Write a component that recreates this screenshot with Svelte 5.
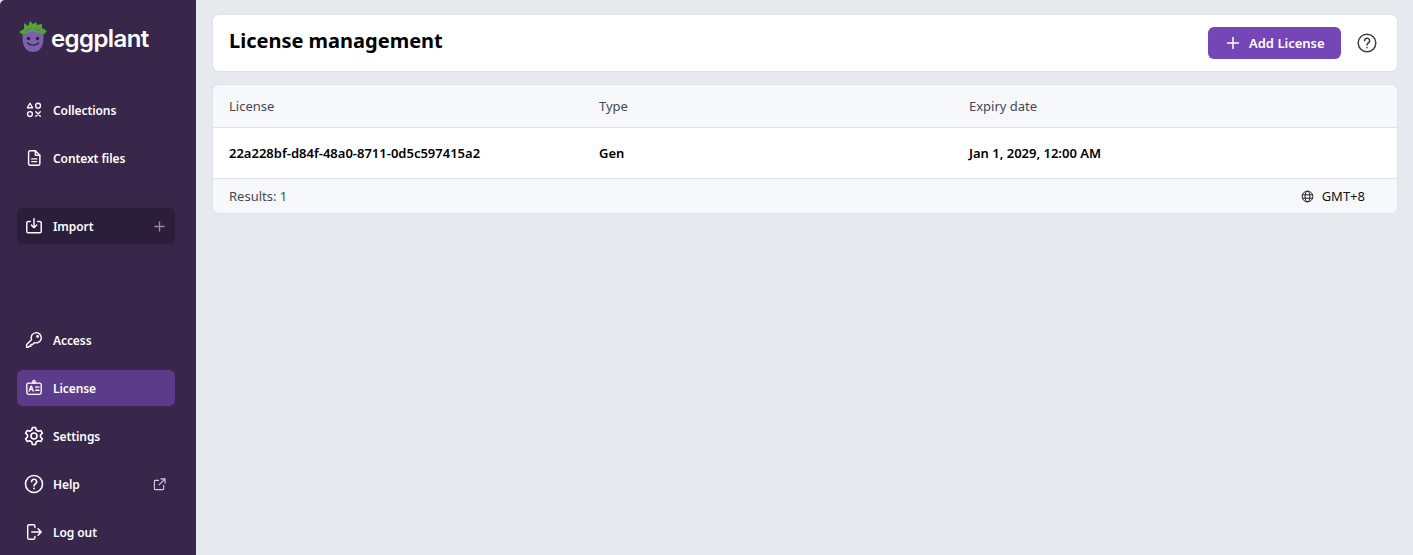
<script>
	const columns = ['License', 'Type', 'Expiry date'];
	const licenses = [
		{ id: '22a228bf-d84f-48a0-8711-0d5c597415a2', type: 'Gen', expiry: 'Jan 1, 2029, 12:00 AM' }
	];
</script>

<div class="page">
	<aside class="sidebar">
		<div class="logo">
			<svg width="30" height="34" viewBox="0 0 30 34">
				<path d="M1 13 L6 10 L6 4 L10 7 L12 2 L15 5 L18 3 L19 6 L24 5 L24 9 L29 12 L26 15 L24 18 L6 18 L4 15 Z" fill="#4fa82c" />
				<path d="M15 9 C22 9 25.5 13 25.5 19 C25.5 27 22 33 15 33 C8 33 4.5 27 4.5 19 C4.5 13 8 9 15 9 Z" fill="#7d60ab" />
				<path d="M5 12 L10 12 L15 9 L20 12 L25 12 L23 15 L15 12 L7 15 Z" fill="#4fa82c" />
				<circle cx="10.5" cy="19.5" r="1.7" fill="#2f1f42" />
				<circle cx="19.5" cy="19.5" r="1.7" fill="#2f1f42" />
				<path d="M9.5 24 C12 27 18 27 20.5 24" fill="none" stroke="#2f1f42" stroke-width="1.2" stroke-linecap="round" />
			</svg>
			<span class="wordmark">eggplant</span>
		</div>

		<nav class="group">
			<a class="item">
				<svg viewBox="0 0 20 20" class="icon thin">
					<path d="M5.5 2.5 L8.5 7.5 H2.5 Z" />
					<circle cx="14.5" cy="5.2" r="2.7" />
					<circle cx="5.5" cy="14.5" r="2.7" />
					<path d="M12 12 L17 17 M17 12 L12 17" />
				</svg>
				<span>Collections</span>
			</a>
			<a class="item">
				<svg viewBox="0 0 20 20" class="icon">
					<path d="M4 3.5 A1.5 1.5 0 0 1 5.5 2 H11.5 L16.5 7 V16.5 A1.5 1.5 0 0 1 15 18 H5.5 A1.5 1.5 0 0 1 4 16.5 Z" />
					<path d="M11.5 2 V7 H16.5 M7.5 11 H13 M7.5 14 H13" />
				</svg>
				<span>Context files</span>
			</a>
		</nav>

		<nav class="group import">
			<a class="item dark">
				<svg viewBox="0 0 20 20" class="icon">
					<path d="M6 5 H3.5 A1.5 1.5 0 0 0 2 6.5 V16 A1.5 1.5 0 0 0 3.5 17.5 H16.5 A1.5 1.5 0 0 0 18 16 V6.5 A1.5 1.5 0 0 0 16.5 5 H14" />
					<path d="M10 2 V12 M7 9 L10 12 L13 9" />
				</svg>
				<span>Import</span>
				<svg viewBox="0 0 12 12" class="trail plus">
					<path d="M6 1 V11 M1 6 H11" />
				</svg>
			</a>
		</nav>

		<nav class="group bottom">
			<a class="item">
				<svg viewBox="0 0 20 20" class="icon">
					<path d="M12.5 1.8 A5.7 5.7 0 1 1 10.6 12.9 L8.5 15 H6.5 V17 H4.5 L3.5 18.2 H1.8 V15 L7.2 9.6 A5.7 5.7 0 0 1 12.5 1.8 Z" />
					<circle cx="14" cy="6" r="0.8" />
				</svg>
				<span>Access</span>
			</a>
			<a class="item active">
				<svg viewBox="0 0 20 20" class="icon thin">
					<rect x="2" y="4.5" width="16" height="12.5" rx="2" />
					<circle cx="10" cy="3" r="1.4" />
					<path d="M4.7 13.5 L6.6 8 H7.2 L9.1 13.5 M5.5 11.6 H8.3 M11.8 9 H15.5 M11.8 12.5 H15.5" />
				</svg>
				<span>License</span>
			</a>
			<a class="item">
				<svg viewBox="0 0 20 20" class="icon large">
					<path d="M8.4 1.5 H11.6 L12.2 4 L14.3 5.2 L16.8 4.5 L18.4 7.2 L16.5 9 V11 L18.4 12.8 L16.8 15.5 L14.3 14.8 L12.2 16 L11.6 18.5 H8.4 L7.8 16 L5.7 14.8 L3.2 15.5 L1.6 12.8 L3.5 11 V9 L1.6 7.2 L3.2 4.5 L5.7 5.2 L7.8 4 Z" />
					<circle cx="10" cy="10" r="3" />
				</svg>
				<span>Settings</span>
			</a>
			<a class="item">
				<svg viewBox="0 0 20 20" class="icon large">
					<circle cx="10" cy="10" r="8.5" />
					<path d="M7.6 7.6 A2.5 2.5 0 1 1 11.2 10 C10.4 10.5 10 11 10 12" />
					<path d="M10 14.4 V14.8" />
				</svg>
				<span>Help</span>
				<svg viewBox="0 0 14 14" class="trail external">
					<path d="M6 2.5 H2.5 A1 1 0 0 0 1.5 3.5 V11.5 A1 1 0 0 0 2.5 12.5 H10.5 A1 1 0 0 0 11.5 11.5 V8 M6.5 7.5 L13 1 M8.5 1 H13 V5.5" />
				</svg>
			</a>
			<a class="item">
				<svg viewBox="0 0 20 20" class="icon">
					<path d="M11 5 V3.5 A1.5 1.5 0 0 0 9.5 2 H4.5 A1.5 1.5 0 0 0 3 3.5 V16.5 A1.5 1.5 0 0 0 4.5 18 H9.5 A1.5 1.5 0 0 0 11 16.5 V15" />
					<path d="M7.5 10 H18 M14.5 6.5 L18 10 L14.5 13.5" />
				</svg>
				<span>Log out</span>
			</a>
		</nav>
	</aside>

	<main class="content">
		<header class="card title-bar">
			<h1>License management</h1>
			<div class="actions">
				<button class="add">
					<svg viewBox="0 0 14 14" width="14" height="14">
						<path d="M7 1.5 V12.5 M1.5 7 H12.5" />
					</svg>
					Add License
				</button>
				<svg class="question" viewBox="0 0 20 20" width="20" height="20">
					<circle cx="10" cy="10" r="8.8" />
					<path d="M7.6 7.8 A2.5 2.5 0 1 1 11.2 10 C10.4 10.5 10 11 10 12" />
					<path d="M10 14.4 V14.8" />
				</svg>
			</div>
		</header>

		<section class="card table">
			<div class="row head">
				{#each columns as column}
					<div>{column}</div>
				{/each}
			</div>
			{#each licenses as license}
				<div class="row body">
					<div>{license.id}</div>
					<div>{license.type}</div>
					<div>{license.expiry}</div>
				</div>
			{/each}
			<div class="foot">
				<span>Results: {licenses.length}</span>
				<span class="zone">
					<svg viewBox="0 0 14 14" width="13" height="13">
						<circle cx="7" cy="7" r="5.8" />
						<ellipse cx="7" cy="7" rx="2.6" ry="5.8" />
						<path d="M1.2 5.2 H12.8 M1.2 8.8 H12.8" />
					</svg>
					GMT+8
				</span>
			</div>
		</section>
	</main>
</div>

<style>
	:global(body) {
		background: #fff;
	}

	.page {
		display: flex;
		height: 555px;
		overflow: hidden;
		font-family: 'Noto Sans', 'Open Sans', sans-serif;
		background: #e6e9ee;
	}

	.sidebar {
		flex: 0 0 196px;
		display: flex;
		flex-direction: column;
		padding: 0 21px 5px 17px;
		box-sizing: border-box;
		background: #38264b;
		color: #fff;
		border-top-left-radius: 5px;
	}

	.logo {
		display: flex;
		align-items: center;
		gap: 3px;
		height: 92px;
		padding: 0 0 20px 1px;
		box-sizing: border-box;
	}

	.logo svg {
		flex: none;
	}

	.wordmark {
		font-family: 'Inter', sans-serif;
		font-size: 24px;
		font-weight: 600;
		letter-spacing: -0.6px;
		margin-top: 4px;
	}

	.group {
		display: flex;
		flex-direction: column;
		gap: 12px;
	}

	.import {
		margin-top: 32px;
	}

	.bottom {
		margin-top: auto;
	}

	.item {
		display: flex;
		align-items: center;
		height: 36px;
		padding: 0 8px;
		border-radius: 6px;
		font-size: 12px;
		font-weight: 600;
		line-height: 18px;
		letter-spacing: -0.08px;
	}

	.item span {
		flex: 1;
		margin: 2px 0 0 10px;
	}

	.item.dark {
		background: #2b1e3a;
	}

	.item.active {
		background: #5c3b8a;
	}

	.icon {
		flex: none;
		width: 18px;
		height: 18px;
		fill: none;
		stroke: #fff;
		stroke-width: 1.6;
		stroke-linecap: round;
		stroke-linejoin: round;
	}

	.icon.thin {
		stroke-width: 1.5;
	}

	.icon.large {
		width: 20px;
		height: 20px;
		margin: 0 -1px;
	}

	.trail {
		flex: none;
		fill: none;
		stroke-linecap: round;
		stroke-linejoin: round;
	}

	.plus {
		width: 11px;
		height: 11px;
		margin-right: 2px;
		stroke: #9a84b8;
		stroke-width: 1.5;
	}

	.external {
		width: 13px;
		height: 13px;
		margin-right: 1px;
		stroke: #d8d0e2;
		stroke-width: 1.2;
	}

	.content {
		flex: 1;
		padding: 15px 16px 0 17px;
		min-width: 0;
	}

	.card {
		background: #fff;
		border-radius: 6px;
		box-shadow: 0 0 0 1px #dfe2e8;
	}

	.title-bar {
		display: flex;
		justify-content: space-between;
		align-items: center;
		height: 56px;
		padding: 0 20px 0 16px;
	}

	h1 {
		margin: -5px 0 0;
		font-size: 20px;
		font-weight: 700;
		line-height: 28px;
		color: #000;
	}

	.actions {
		display: flex;
		align-items: center;
		gap: 16px;
	}

	.add {
		display: flex;
		align-items: center;
		gap: 9px;
		height: 32px;
		width: 133px;
		padding: 0 0 0 18px;
		border: 0;
		border-radius: 6px;
		background: #7546b5;
		color: #fff;
		font: 600 13px 'Noto Sans', sans-serif;
	}

	.add svg {
		fill: none;
		stroke: #fff;
		stroke-width: 1.5;
		stroke-linecap: round;
	}

	.question {
		fill: none;
		stroke: #3d3d3d;
		stroke-width: 1.5;
		stroke-linecap: round;
	}

	.table {
		margin-top: 14px;
		overflow: hidden;
	}

	.row {
		display: grid;
		grid-template-columns: 370px 370px 1fr;
		align-items: center;
		padding: 0 16px;
		border-bottom: 1px solid #dfe2e8;
		font-size: 13px;
	}

	.head {
		height: 42px;
		background: #f7f8fc;
		color: #44484f;
		font-weight: 400;
	}

	.body {
		height: 50px;
		color: #000;
		font-weight: 600;
	}

	.foot {
		display: flex;
		justify-content: space-between;
		align-items: center;
		height: 34px;
		padding: 0 32px 0 16px;
		background: #f7f8fc;
		color: #44484f;
		font-size: 13px;
	}

	.zone {
		display: flex;
		align-items: center;
		gap: 8px;
		color: #111;
	}

	.zone svg {
		fill: none;
		stroke: #111;
		stroke-width: 1;
	}
</style>
